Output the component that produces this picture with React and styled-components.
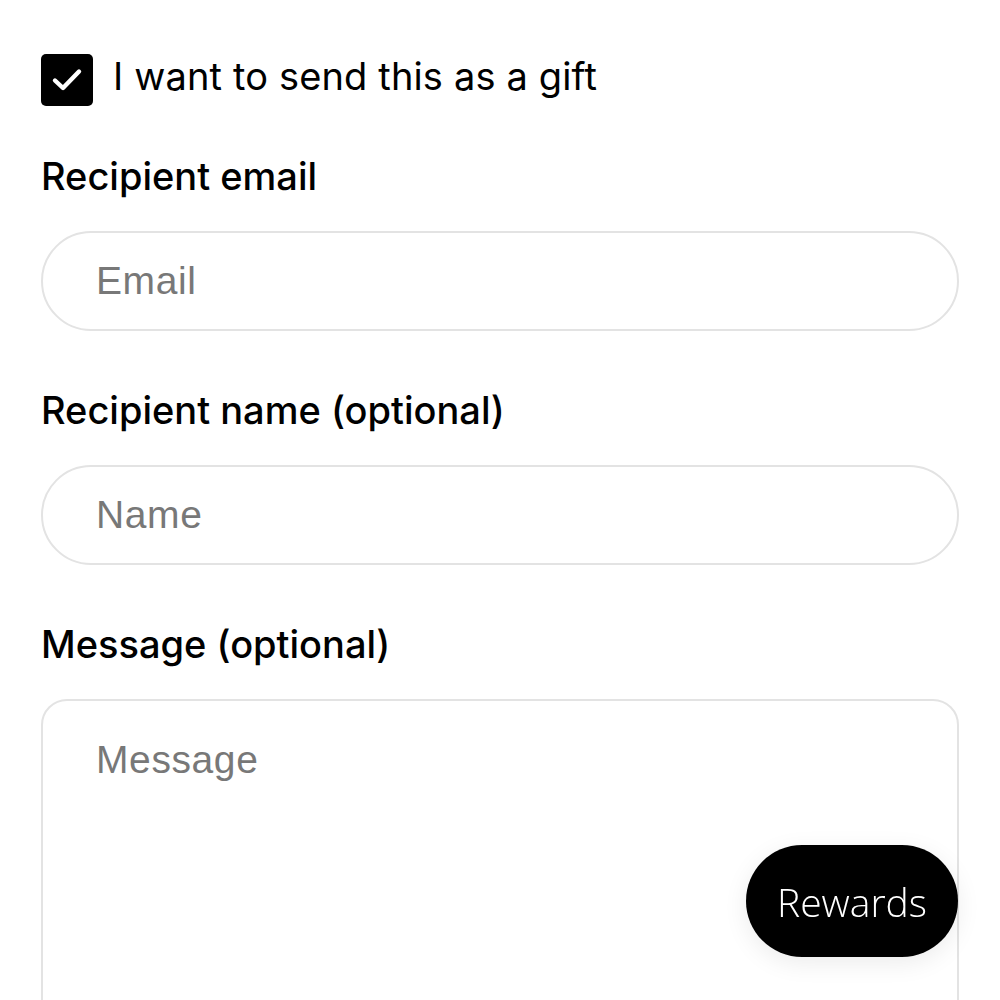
import React from "react";
import styled, { createGlobalStyle } from "styled-components";

const GlobalStyle = createGlobalStyle`
  html, body {
    margin: 0;
    padding: 0;
    background: #ffffff;
    height: 1000px;
    overflow: hidden;
  }
  * {
    box-sizing: border-box;
  }
`;

const Page = styled.div`
  padding: 54px 41px 0 41px;
  font-family: Inter, "Noto Sans", sans-serif;
  color: #000;
`;

const Form = styled.form`
  display: flex;
  flex-direction: column;
  gap: 56px;
`;

const CheckRow = styled.label`
  display: flex;
  align-items: center;
  gap: 20px;
  margin-bottom: -9px;
  font-size: 38px;
  line-height: 1.2;
  font-weight: 400;
  letter-spacing: 0.15px;
  cursor: pointer;

  span.text {
    margin-top: -6px;
  }
`;

const Box = styled.span`
  width: 52px;
  height: 52px;
  border-radius: 5px;
  background: #000;
  display: flex;
  align-items: center;
  justify-content: center;
  flex-shrink: 0;
`;

const Field = styled.div`
  display: flex;
  flex-direction: column;
  gap: 32px;
`;

const Label = styled.label`
  font-size: 38px;
  line-height: 46px;
  font-weight: 500;
  letter-spacing: 0;
`;

const inputBase = `
  width: 100%;
  border: 2px solid #e3e3e3;
  background: #fff;
  font-family: "Liberation Sans", Arial, sans-serif;
  font-size: 39px;
  letter-spacing: 0.6px;
  color: #000;
  outline: none;
  &::placeholder {
    color: #787878;
  }
`;

const TextInput = styled.input`
  ${inputBase}
  height: 100px;
  border-radius: 50px;
  padding: 0 53px;
`;

const TextArea = styled.textarea`
  ${inputBase}
  height: 360px;
  border-radius: 26px;
  padding: 36px 53px;
  line-height: 1.2;
  resize: none;
`;

const RewardsButton = styled.button`
  position: fixed;
  right: 42px;
  bottom: 43px;
  width: 212px;
  height: 112px;
  border-radius: 56px;
  border: none;
  background: #000;
  color: #fff;
  font-family: "Open Sans", sans-serif;
  font-weight: 300;
  font-size: 39px;
  box-shadow: 0 6px 24px rgba(0, 0, 0, 0.08);
  cursor: pointer;
`;

function CheckIcon() {
  return (
    <svg width="34" height="34" viewBox="0 0 34 34" fill="none">
      <path
        d="M5 17.5 L13 25 L29 8.5"
        stroke="#fff"
        strokeWidth="4.4"
        strokeLinecap="round"
        strokeLinejoin="round"
      />
    </svg>
  );
}

export default function App() {
  return (
    <>
      <GlobalStyle />
      <Page>
        <Form onSubmit={(e) => e.preventDefault()}>
          <CheckRow>
            <Box>
              <CheckIcon />
            </Box>
            <span className="text">I want to send this as a gift</span>
          </CheckRow>

          <Field>
            <Label htmlFor="gift-email">Recipient email</Label>
            <TextInput id="gift-email" type="email" placeholder="Email" />
          </Field>

          <Field>
            <Label htmlFor="gift-name">Recipient name (optional)</Label>
            <TextInput id="gift-name" type="text" placeholder="Name" />
          </Field>

          <Field>
            <Label htmlFor="gift-message">Message (optional)</Label>
            <TextArea id="gift-message" placeholder="Message" />
          </Field>
        </Form>
      </Page>
      <RewardsButton type="button">Rewards</RewardsButton>
    </>
  );
}
